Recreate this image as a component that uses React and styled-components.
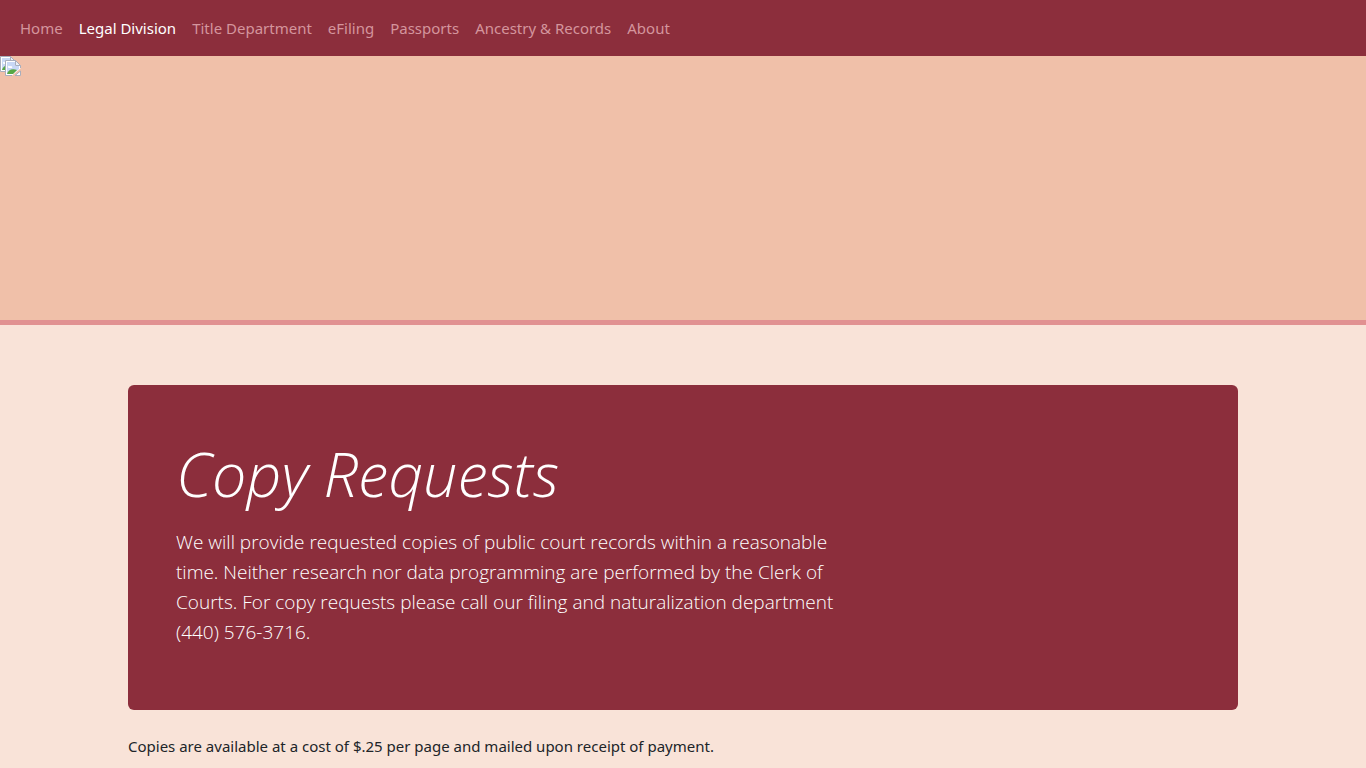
import styled, { createGlobalStyle } from "styled-components"

const GlobalStyle = createGlobalStyle`
  *, *::before, *::after {
    box-sizing: border-box;
  }
  body {
    margin: 0;
    background-color: #f9e3d8;
    color: #212529;
    font-family: "Noto Sans", "Open Sans", sans-serif;
    font-size: 15px;
    line-height: 24px;
  }
`

const Navbar = styled.nav`
  background-color: #8c2e3c;
  padding: 8px 12px;
`

const NavList = styled.ul`
  display: flex;
  flex-wrap: wrap;
  list-style: none;
  margin: 0;
  padding: 0;
`

const NavLink = styled.a`
  display: block;
  padding: 8px;
  color: ${(props) => (props.$active ? "#ffffff" : "#d4959d")};
  text-decoration: none;
  &:hover {
    color: #ffffff;
  }
`

const Hero = styled.header`
  position: relative;
  height: 269px;
  background-color: #f0c0a9;
  border-bottom: 5px solid #e19191;
`

const Picture = styled.svg`
  position: absolute;
  top: ${(props) => (props.$front ? 4 : 0)}px;
  left: ${(props) => (props.$front ? 5 : 0)}px;
  width: 16px;
  height: 16px;
`

const Container = styled.main`
  max-width: 1140px;
  margin: 0 auto;
  padding: 60px 15px 24px;
`

const Jumbotron = styled.section`
  background-color: #8c2e3c;
  color: #ffffff;
  border-radius: 6px;
  padding: 48px;
  margin-bottom: 24px;
  font-family: "Open Sans", sans-serif;
  font-weight: 300;
`

const Title = styled.h1`
  margin: 0 0 12px;
  font-size: 61px;
  font-style: italic;
  font-weight: 300;
  line-height: 82px;
`

const Lead = styled.p`
  max-width: 676px;
  margin: 0 0 15px;
  font-size: 19px;
  line-height: 30px;
`

const Text = styled.p`
  margin: 0 0 16px;
`

const links = [
  "Home",
  "Legal Division",
  "Title Department",
  "eFiling",
  "Passports",
  "Ancestry & Records",
  "About",
]

function MissingPicture({ front }) {
  return (
    <Picture $front={front} viewBox="0 0 16 16" aria-hidden="true">
      <path d="M.5.5h10l5 5v3L7 15.500H.5z" fill="#fff" />
      <path d="M2 2h8v4h4v3l-6 5H2z" fill="#c9d8f5" />
      <path d="M3 7c0-1.500 1.500-1.500 2-.5C6 5.500 8 6.500 7 8H3.500z" fill="#fff" />
      <path d="M2 14c1-4 5-6 10-4l-4 4z" fill="#57a845" />
      <path d="M7 15.500H.5V.5h10l5 5V8" fill="none" stroke="#a8aebd" />
      <path d="M15.500 11v4.500H10z" fill="#fff" stroke="#a8aebd" />
      <path d="M10.500.5v5h5z" fill="#eef0f5" stroke="#a8aebd" />
    </Picture>
  )
}

export default function App() {
  return (
    <>
      <GlobalStyle />
      <Navbar>
        <NavList>
          {links.map((label) => (
            <li key={label}>
              <NavLink href="#" $active={label === "Legal Division"}>
                {label}
              </NavLink>
            </li>
          ))}
        </NavList>
      </Navbar>
      <Hero>
        <MissingPicture />
        <MissingPicture front />
      </Hero>
      <Container>
        <Jumbotron>
          <Title>Copy Requests</Title>
          <Lead>
            We will provide requested copies of public court records within a reasonable time. Neither
            research nor data programming are performed by the Clerk of Courts. For copy requests please
            call our filing and naturalization department (440) 576-3716.
          </Lead>
        </Jumbotron>
        <Text>Copies are available at a cost of $.25 per page and mailed upon receipt of payment.</Text>
      </Container>
    </>
  )
}
